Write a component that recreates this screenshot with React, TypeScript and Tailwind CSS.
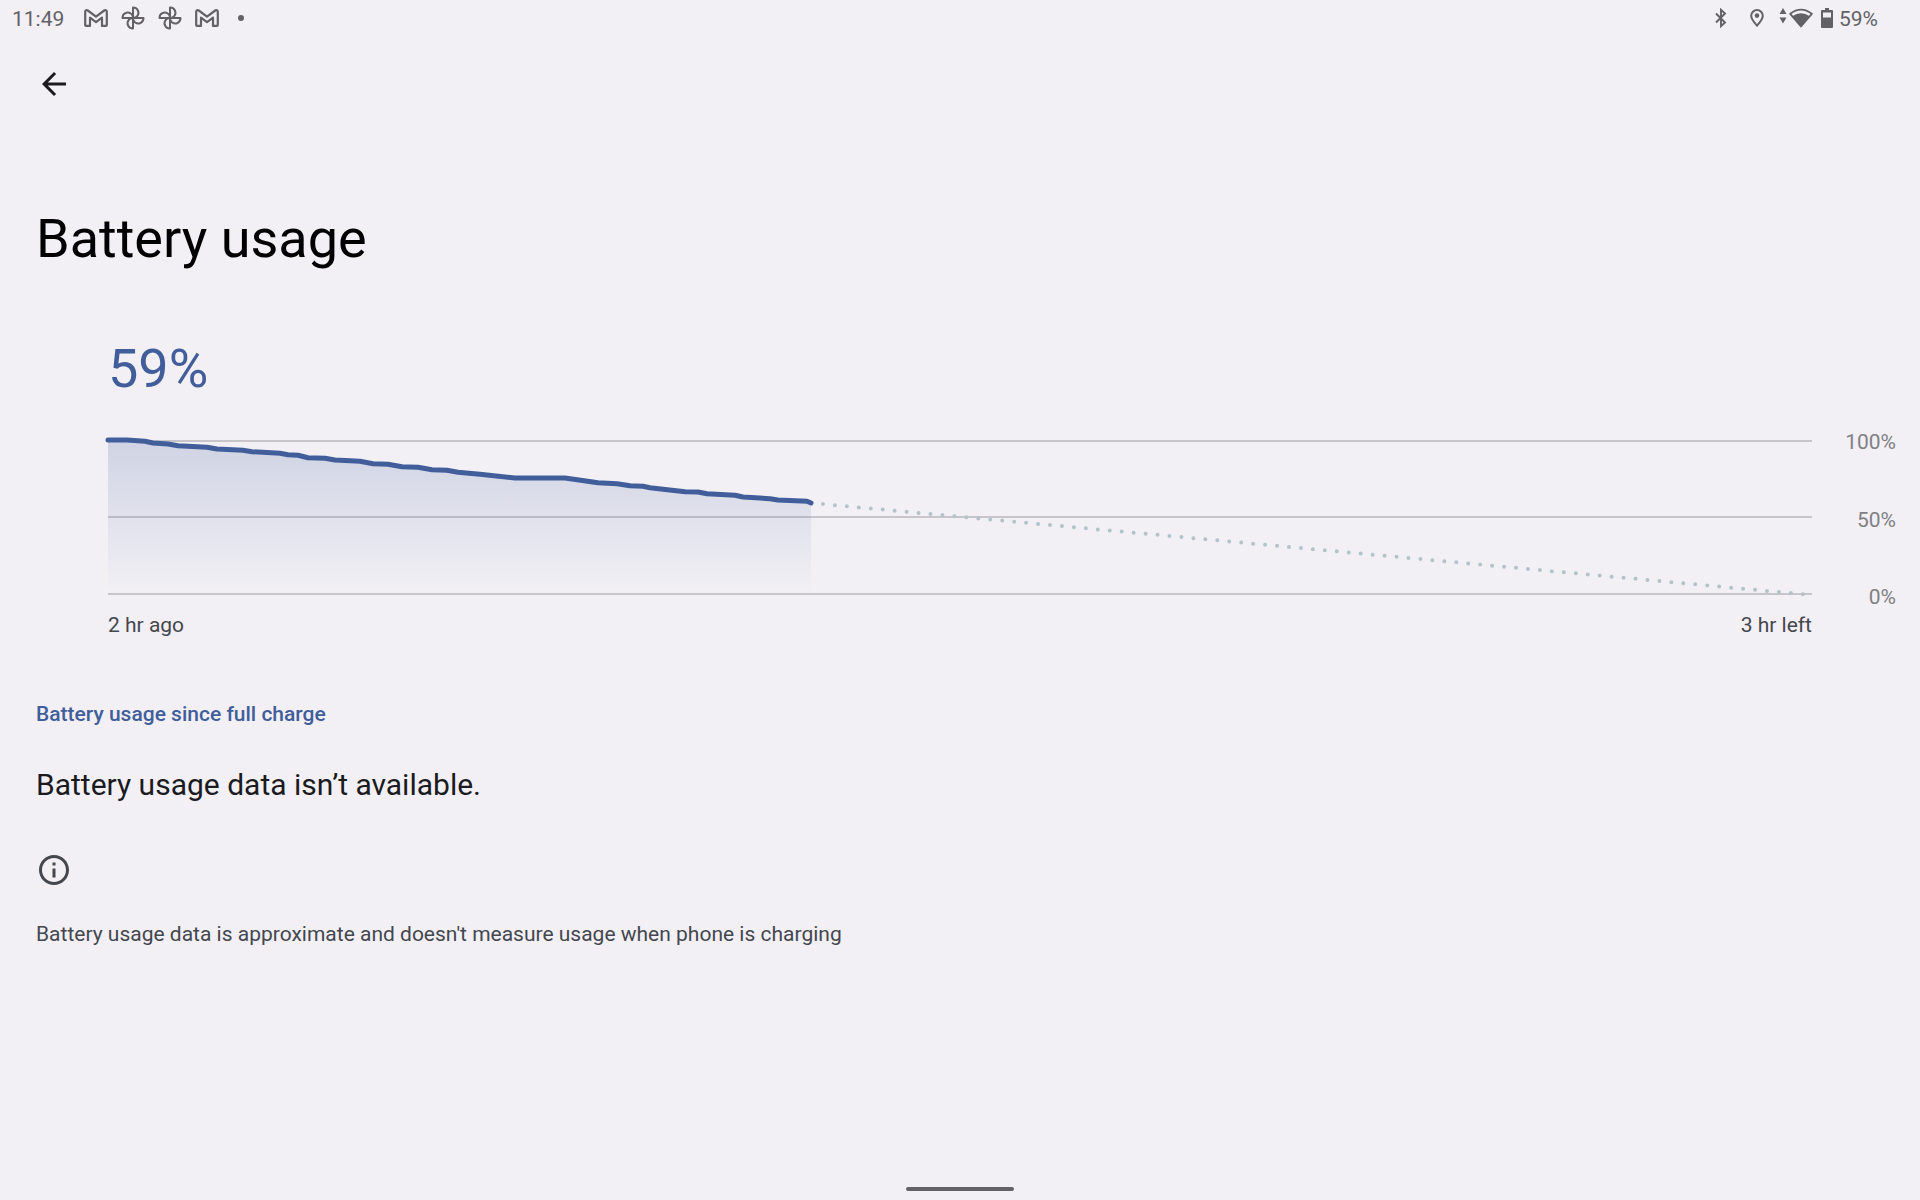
import React from "react";

const history: [number, number][] = [
  [0, 0], [19, 0], [37, 1.3], [45, 3], [60, 4], [70, 5.7], [99, 7.3], [109, 9], [135, 10.3],
  [144, 11.7], [172, 13.3], [180, 14.7], [190, 15.3], [200, 17.7], [217, 18.3], [227, 20],
  [252, 21.3], [265, 23.7], [280, 24.3], [294, 26.7], [310, 27.3], [324, 29.7], [339, 30.3],
  [350, 32.3], [372, 34.3], [407, 38], [457, 38], [490, 42.7], [509, 43.7], [522, 45.7],
  [535, 46.3], [542, 47.7], [577, 51.7], [590, 52], [599, 53.7], [627, 55.3], [635, 57],
  [662, 58.7], [670, 60], [699, 61.3], [703, 63],
];
const linePoints = history.map((p) => p.join(",")).join(" ");

function GmailIcon() {
  return (
    <svg viewBox="0 0 24 18" className="h-[18px] w-6" fill="none" stroke="currentColor" strokeWidth="2.200" strokeLinejoin="round">
      <path d="M1.200 2.800C1.200 1.400 2.700.7 3.800 1.500L12 7.600l8.200-6.100C21.300.7 22.800 1.400 22.800 2.800V15.900a1 1 0 0 1-1 1h-3.800V8.700L12 13.200 6 8.700V16.900H2.200a1 1 0 0 1-1-1z" />
    </svg>
  );
}

function PinwheelIcon() {
  return (
    <svg viewBox="0 0 24 24" className="size-6" fill="none" stroke="currentColor" strokeWidth="2" strokeLinejoin="round">
      <path d="M12 12V1.500a5.300 5.300 0 0 1 4.500 8.300q-1.300 2.200-4.500 2.200" />
      <path d="M12 12H22.500a5.300 5.300 0 0 1-8.300 4.500q-2.200-1.300-2.200-4.500" />
      <path d="M12 12V22.500a5.300 5.300 0 0 1-4.500-8.300q1.300-2.200 4.500-2.200" />
      <path d="M12 12H1.500a5.300 5.300 0 0 1 8.300-4.500q2.200 1.300 2.200 4.500" />
    </svg>
  );
}

function StatusBar() {
  return (
    <header className="flex h-9 items-center justify-between pr-[42px] pl-3 text-[21px] leading-6 text-[#626165]">
      <div className="flex items-center">
        <time className="w-[72px] pt-0.5">11:49</time>
        <div className="flex items-center gap-[13px]">
          <GmailIcon />
          <PinwheelIcon />
          <PinwheelIcon />
          <GmailIcon />
        </div>
        <span className="ml-[19px] size-1.5 rounded-full bg-current" />
      </div>
      <div className="flex items-center">
        <svg viewBox="0 0 12 20" className="mr-[23px] h-5 w-3" fill="none" stroke="currentColor" strokeWidth="1.900">
          <path d="M1 5.500l9 9L6 18.200V1.800l4 3.700-9 9" />
        </svg>
        <svg viewBox="0 0 14 18" className="mr-[15px] h-[18px] w-3.5" fill="none" stroke="currentColor" strokeWidth="2">
          <path d="M7 16.700C3.500 12.800 1.200 9.700 1.200 6.800a5.800 5.800 0 0 1 11.600 0c0 2.900-2.300 6-5.800 9.900z" />
          <circle cx="7" cy="6.600" r="2.300" fill="currentColor" stroke="none" />
        </svg>
        <svg viewBox="0 0 34 20" className="mr-2 h-5 w-[34px]" fill="currentColor">
          <path d="M4 0l3.500 6h-7zM4 15.500l3.500-6h-7z" />
          <path d="M11.200 5.800Q22 -2.600 32.800 5.800L22 18.500z" fill="none" stroke="currentColor" strokeWidth="1.800" strokeLinejoin="round" />
          <path d="M13.200 8.200Q22 2.200 30.800 8.200L22 19z" />
        </svg>
        <svg viewBox="0 0 12 20" className="mr-1.5 h-5 w-3" fill="currentColor" fillRule="evenodd">
          <path d="M4 0h4v2h3a1 1 0 0 1 1 1v16a1 1 0 0 1-1 1H1a1 1 0 0 1-1-1V3a1 1 0 0 1 1-1h3zM2 4.500V9.500h8V4.500z" />
        </svg>
        <span className="pt-0.5">59%</span>
      </div>
    </header>
  );
}

function BatteryChart() {
  return (
    <figure className="mt-[39px] grid grid-cols-[1fr_84px] pr-6 pl-[108px]">
      <svg viewBox="0 0 1704 155" preserveAspectRatio="none" className="h-[155px] w-full overflow-visible" role="img" aria-label="Battery level over time">
        <defs>
          <linearGradient id="level" x1="0" y1="0" x2="0" y2="155" gradientUnits="userSpaceOnUse">
            <stop offset="0" stopColor="#415e9b" stopOpacity="0.2" />
            <stop offset="1" stopColor="#415e9b" stopOpacity="0" />
          </linearGradient>
        </defs>
        <path d="M0 1H1704M0 77H1704M0 154H1704" stroke="#c7c5ca" strokeWidth="2" vectorEffect="non-scaling-stroke" />
        <polygon points={`${linePoints} 703,155 0,155`} fill="url(#level)" />
        <path d="M703 63L1700 154.700" stroke="#b2c3ca" strokeWidth="4" strokeLinecap="round" strokeDasharray="0 12" strokeDashoffset="-12" vectorEffect="non-scaling-stroke" />
        <polyline points={linePoints} fill="none" stroke="#415e9b" strokeWidth="5" strokeLinecap="round" strokeLinejoin="round" vectorEffect="non-scaling-stroke" />
      </svg>
      <div className="-mt-3 -mb-4 flex flex-col justify-between text-right text-[21px] leading-7 text-[#808084]">
        <span>100%</span>
        <span>50%</span>
        <span>0%</span>
      </div>
      <figcaption className="mt-4 flex justify-between text-[21px] leading-7 text-[#44474e]">
        <span>2 hr ago</span>
        <span>3 hr left</span>
      </figcaption>
    </figure>
  );
}

export default function App() {
  return (
    <div className="flex min-h-screen flex-col bg-[#f2f0f5] font-['Roboto',sans-serif] text-[#1b1b1f]">
      <StatusBar />
      <nav className="flex h-24 items-center px-9">
        <button type="button" aria-label="Navigate up" className="size-9">
          <svg viewBox="0 0 24 24" className="size-9" fill="currentColor">
            <path d="M20 11H7.830l5.590-5.590L12 4l-8 8 8 8 1.410-1.410L7.830 13H20v-2z" />
          </svg>
        </button>
      </nav>
      <main className="flex-1">
        <h1 className="mt-[75px] px-9 text-[54px] leading-16 text-black">Battery usage</h1>
        <p className="mt-[66px] pl-[108px] text-[54px] leading-16 text-[#415e9b]">59%</p>
        <BatteryChart />
        <section className="px-9">
          <h2 className="mt-[61px] text-[21px] leading-7 font-medium text-[#415e9b]">Battery usage since full charge</h2>
          <p className="mt-[39px] text-[30px] leading-9">Battery usage data isn’t available.</p>
          <svg viewBox="0 0 24 24" className="mt-[49px] size-9 text-[#44474e]" fill="currentColor">
            <path d="M11 7h2v2h-2zm0 4h2v6h-2zm1-9C6.480 2 2 6.480 2 12s4.480 10 10 10 10-4.480 10-10S17.520 2 12 2zm0 18c-4.410 0-8-3.590-8-8s3.590-8 8-8 8 3.590 8 8-3.590 8-8 8z" />
          </svg>
          <p className="mt-8 text-[21px] leading-7 text-[#44474e]">Battery usage data is approximate and doesn't measure usage when phone is charging</p>
        </section>
      </main>
      <footer className="flex justify-center pb-[9px]">
        <div className="h-1 w-[108px] rounded-full bg-[#636266]" />
      </footer>
    </div>
  );
}
